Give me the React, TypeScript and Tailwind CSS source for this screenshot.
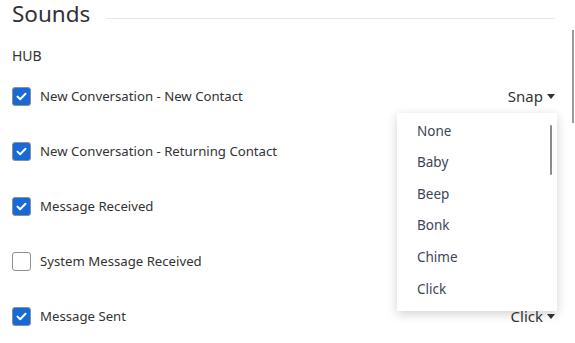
import React from 'react';

const rows = [
  { label: 'New Conversation - New Contact', checked: true, sound: 'Snap' },
  { label: 'New Conversation - Returning Contact', checked: true },
  { label: 'Message Received', checked: true },
  { label: 'System Message Received', checked: false },
  { label: 'Message Sent', checked: true, sound: 'Click' },
];

const options = ['None', 'Baby', 'Beep', 'Bonk', 'Chime', 'Click'];

const Checkbox: React.FC<{ checked: boolean }> = ({ checked }) =>
  checked ? (
    <span className="flex h-[19px] w-[19px] items-center justify-center rounded-[3px] border border-[#8a8f98] bg-[#1769d6]">
      <svg width="11" height="9" viewBox="0 0 11 9" fill="none">
        <path d="M1.5 4.6 4.2 7.2 9.5 1.8" stroke="white" strokeWidth="2" strokeLinecap="round" strokeLinejoin="round" />
      </svg>
    </span>
  ) : (
    <span className="h-[19px] w-[19px] rounded-[3px] border border-[#8a8f98] bg-white" />
  );

const Caret = () => (
  <svg width="8" height="5" viewBox="0 0 8 5" className="ml-[4px]">
    <path d="M0 0h8L4 5z" fill="#333" />
  </svg>
);

export default function App() {
  return (
    <div className="relative h-[343px] w-[575px] overflow-hidden bg-white text-[#333] font-['Noto_Sans',sans-serif]">
      <div className="pl-[12px] pr-[20px]">
        <div className="flex h-[28px] items-start">
          <h1 className="text-[22.5px] leading-[28px] text-[#333]">Sounds</h1>
          <div className="ml-[16px] mt-[18px] h-px flex-1 bg-[#e8e8e8]" />
        </div>
        <div className="mt-[19px] text-[14px] leading-[18px]">HUB</div>
        <div className="mt-[4px]">
          {rows.map((r) => (
            <div key={r.label} className="flex h-[55px] items-center text-[13.2px]">
              <Checkbox checked={r.checked} />
              <span className="ml-[9px]">{r.label}</span>
              {r.sound && (
                <span className="ml-auto flex items-center text-[15px]">
                  {r.sound}
                  <Caret />
                </span>
              )}
            </div>
          ))}
        </div>
      </div>

      <div className="absolute left-[397px] top-[113px] h-[198px] w-[160px] bg-white shadow-[0_3px_10px_rgba(0,0,0,0.18)]">
        <ul className="pt-[2px]">
          {options.map((o) => (
            <li key={o} className="flex h-[31.6px] items-center pl-[20px] text-[13.5px] text-[#3b4656]">
              {o}
            </li>
          ))}
        </ul>
        <div className="absolute right-[5px] top-[12px] h-[50px] w-[2px] rounded bg-[#8c8c8c]" />
      </div>

      <div className="absolute right-[1px] top-[30px] h-[93px] w-[2px] bg-[#9a9a9a]" />
    </div>
  );
}
